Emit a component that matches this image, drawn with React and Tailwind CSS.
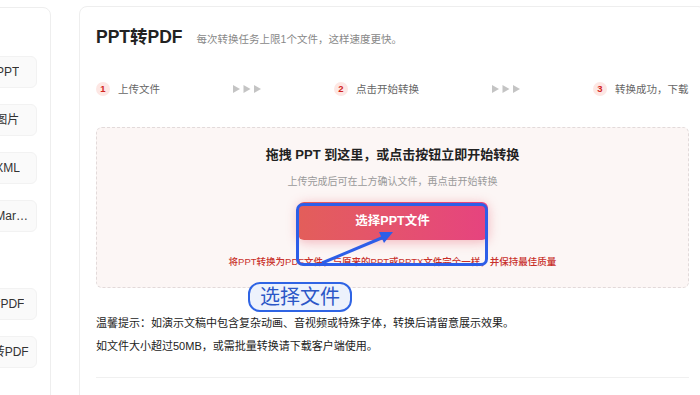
import React from 'react';

const sideGroups = [
    ['PDF转PPT', 'PPT转图片', 'PPT转XML', 'PPT转Markdown'],
    ['Word转PDF', 'HTML转PDF'],
];

const steps = [
    { n: 1, label: '上传文件' },
    { n: 2, label: '点击开始转换' },
    { n: 3, label: '转换成功，下载' },
];

function Arrows() {
    return (
        <svg width="28" height="10" viewBox="0 0 28 10" className="shrink-0">
            <polygon points="0,1 7,5 0,9" fill="#c4c4c4" />
            <polygon points="10.5,1 17.5,5 10.5,9" fill="#c4c4c4" />
            <polygon points="21,1 28,5 21,9" fill="#c4c4c4" />
        </svg>
    );
}

function Step({ n, label }) {
    return (
        <div className="flex items-center shrink-0">
            <span className="w-[14px] h-[14px] rounded-full bg-[#fde7e4] text-[#d2261f] text-[9.5px] font-bold flex items-center justify-center">
                {n}
            </span>
            <span className="ml-[8px] text-[10.5px] leading-[16px] text-[#666] whitespace-nowrap">{label}</span>
        </div>
    );
}

export default function App() {
    return (
        <div className="w-[700px] h-[395px] overflow-hidden bg-white flex font-['Liberation_Sans','Noto_Sans_CJK_SC',sans-serif]">
            {/* sidebar, mostly scrolled out of view */}
            <aside className="ml-[-100px] mt-[7px] w-[151px] h-[420px] shrink-0 bg-white border border-[#eeeeee] rounded-lg pt-[48px] pl-[46px] pr-[13px]">
                {sideGroups.map((group, gi) => (
                    <div key={gi} className={gi > 0 ? 'mt-[56px]' : ''}>
                        {group.map((item) => (
                            <div
                                key={item}
                                className="h-[32px] mb-[16px] pl-[12px] pr-[6px] flex items-center bg-[#fafafa] border border-[#f2f2f2] rounded-md text-[12px] text-[#333]"
                            >
                                <span className="truncate">{item}</span>
                            </div>
                        ))}
                    </div>
                ))}
            </aside>

            <main className="ml-[28px] mt-[6px] w-[627px] h-[420px] shrink-0 bg-white border border-[#eeeeee] rounded-lg px-[16px] pt-[18px]">
                <div className="flex items-baseline">
                    <h1 className="text-[17.5px] leading-[24px] font-bold text-[#222]">PPT转PDF</h1>
                    <p className="ml-[14px] text-[10.5px] text-[#888] whitespace-nowrap">每次转换任务上限1个文件，这样速度更快。</p>
                </div>

                <div className="mt-[32px] flex items-center gap-[73px]">
                    <Step {...steps[0]} />
                    <Arrows />
                    <Step {...steps[1]} />
                    <Arrows />
                    <Step {...steps[2]} />
                </div>

                <div className="relative mt-[30px] h-[161px] border border-dashed border-[#e2dada] rounded-md bg-[#fcf6f5] flex flex-col items-center pt-[18px]">
                    <p className="text-[13px] leading-[18px] font-bold text-[#222]">拖拽 PPT 到这里，或点击按钮立即开始转换</p>
                    <p className="mt-[11px] text-[10px] leading-[14px] text-[#999]">上传完成后可在上方确认文件，再点击开始转换</p>
                    <button className="mt-[13px] w-[190px] h-[38px] rounded-md bg-gradient-to-r from-[#e35e5a] to-[#e6437f] text-white text-[12.5px] font-bold shadow-[0_2px_12px_rgba(230,80,100,0.4)]">
                        选择PPT文件
                    </button>
                    <p className="mt-[15px] text-[9.5px] leading-[14px] font-medium text-[#c8302a] whitespace-nowrap">
                        将PPT转换为PDF文件，与原来的PPT或PPTX文件完全一样，并保持最佳质量
                    </p>

                    {/* annotation overlay */}
                    <div className="absolute left-[199px] top-[75px] w-[192px] h-[63px] border-[3px] border-[#2d5ee8] rounded-[7px]" />
                    <svg className="absolute left-0 top-0" width="593" height="160" viewBox="0 0 593 160">
                        <line x1="225" y1="135" x2="287" y2="109" stroke="#2d5ee8" strokeWidth="3" />
                        <polygon points="296,104 287,115 282,104" fill="#2d5ee8" />
                    </svg>
                    <div className="absolute left-[151px] top-[154px] w-[104px] h-[30px] border-2 border-[#2f64e4] rounded-[12px] bg-[#edf2fc] flex items-center justify-center text-[20px] leading-none text-[#2b57c7]">
                        选择文件
                    </div>
                </div>

                <p className="mt-[24px] text-[11px] leading-[23px] text-[#222]">温馨提示：如演示文稿中包含复杂动画、音视频或特殊字体，转换后请留意展示效果。</p>
                <p className="text-[11px] leading-[23px] text-[#222]">如文件大小超过50MB，或需批量转换请下载客户端使用。</p>

                <div className="mt-[19px] border-t border-[#f0f0f0]" />
            </main>
        </div>
    );
}
